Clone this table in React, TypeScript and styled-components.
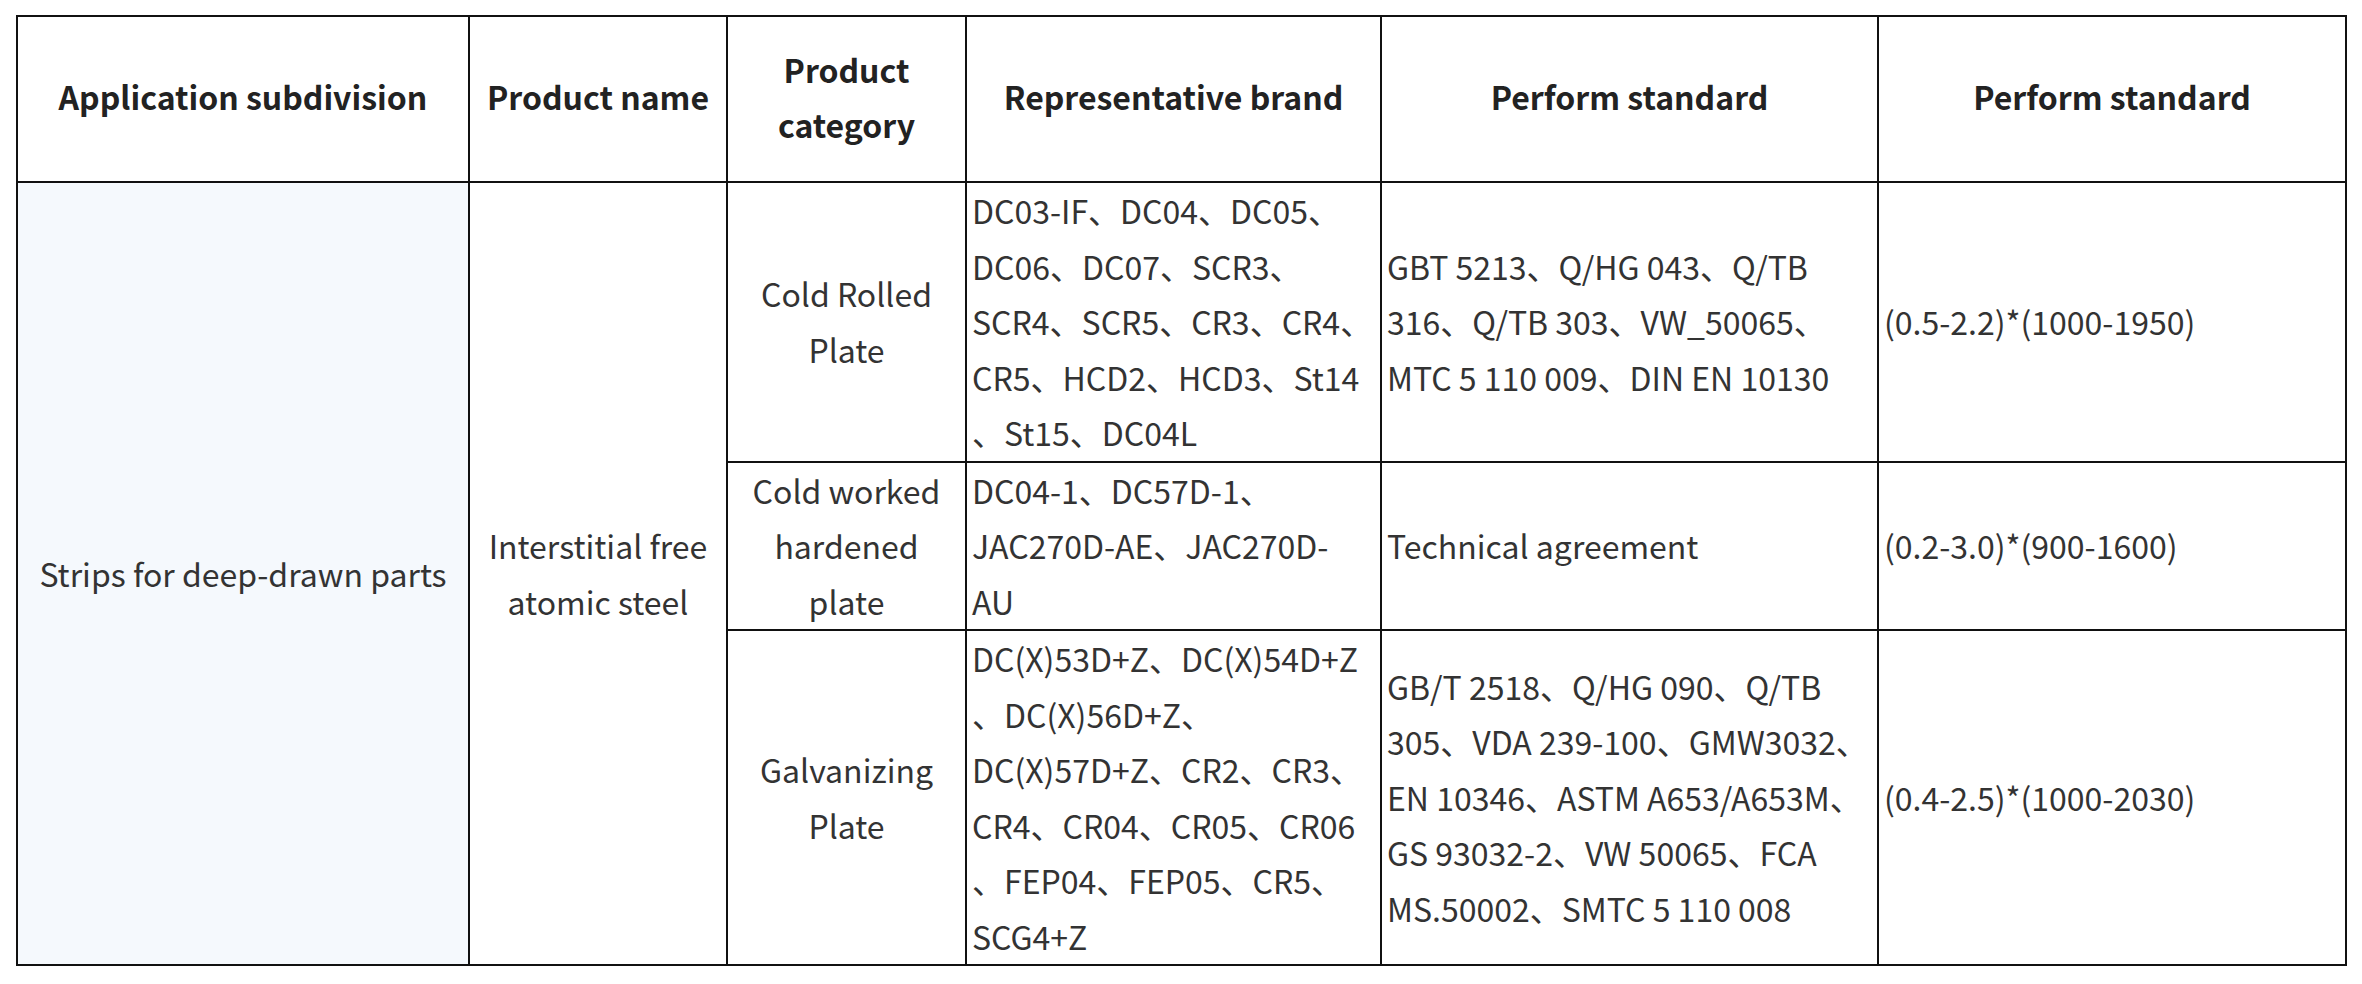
import React from "react";
import styled, { createGlobalStyle } from "styled-components";

const Global = createGlobalStyle`
  html, body { margin: 0; padding: 0; background: #ffffff; }
  body { font-family: "Noto Sans CJK SC", "Noto Sans", sans-serif; }
`;

const Page = styled.div`
  padding: 15px 16px;
  width: 2362px;
  box-sizing: border-box;
`;

const Table = styled.table`
  width: 2329px;
  border-collapse: collapse;
  table-layout: fixed;
  border: 2px solid #111;
  font-family: "Noto Sans CJK SC", "Noto Sans", sans-serif;
  font-size: 32px;
  line-height: 55.5px;
  color: #333;
`;

const Th = styled.th`
  border: 2px solid #111;
  font-weight: 700;
  color: #222;
  text-align: center;
  vertical-align: middle;
  padding: 24px 6px 28px;
  height: 166px;
  box-sizing: border-box;
`;

const Td = styled.td<{ $align?: "left" | "center"; $tint?: boolean }>`
  border: 2px solid #111;
  padding: 0 5px;
  text-align: ${(p) => p.$align ?? "center"};
  vertical-align: middle;
  background: ${(p) => (p.$tint ? "#f5f9fd" : "#ffffff")};
  white-space: nowrap;
`;

const Lines = ({ lines }: { lines: string[] }) => (
  <>
    {lines.map((l, i) => (
      <React.Fragment key={i}>
        {i > 0 && <br />}
        {l}
      </React.Fragment>
    ))}
  </>
);

const widths = [452, 258, 239, 415, 497, 468];

const headers: string[][] = [
  ["Application subdivision"],
  ["Product name"],
  ["Product", "category"],
  ["Representative brand"],
  ["Perform standard"],
  ["Perform standard"],
];

const rows = [
  {
    category: ["Cold Rolled", "Plate"],
    brand: [
      "DC03-IF、DC04、DC05、",
      "DC06、DC07、SCR3、",
      "SCR4、SCR5、CR3、CR4、",
      "CR5、HCD2、HCD3、St14",
      "、St15、DC04L",
    ],
    standard: [
      "GBT 5213、Q/HG 043、Q/TB",
      "316、Q/TB 303、VW_50065、",
      "MTC 5 110 009、DIN EN 10130",
    ],
    size: "(0.5-2.2)*(1000-1950)",
  },
  {
    category: ["Cold worked", "hardened", "plate"],
    brand: ["DC04-1、DC57D-1、", "JAC270D-AE、JAC270D-", "AU"],
    standard: ["Technical agreement"],
    size: "(0.2-3.0)*(900-1600)",
  },
  {
    category: ["Galvanizing", "Plate"],
    brand: [
      "DC(X)53D+Z、DC(X)54D+Z",
      "、DC(X)56D+Z、",
      "DC(X)57D+Z、CR2、CR3、",
      "CR4、CR04、CR05、CR06",
      "、FEP04、FEP05、CR5、",
      "SCG4+Z",
    ],
    standard: [
      "GB/T 2518、Q/HG 090、Q/TB",
      "305、VDA 239-100、GMW3032、",
      "EN 10346、ASTM A653/A653M、",
      "GS 93032-2、VW 50065、FCA",
      "MS.50002、SMTC 5 110 008",
    ],
    size: "(0.4-2.5)*(1000-2030)",
  },
];

export default function App() {
  return (
    <Page>
      <Global />
      <Table>
        <colgroup>
          {widths.map((w, i) => (
            <col key={i} style={{ width: w }} />
          ))}
        </colgroup>
        <thead>
          <tr>
            {headers.map((h, i) => (
              <Th key={i}>
                <Lines lines={h} />
              </Th>
            ))}
          </tr>
        </thead>
        <tbody>
          {rows.map((r, i) => (
            <tr key={i}>
              {i === 0 && (
                <>
                  <Td rowSpan={3} $tint>
                    Strips for deep-drawn parts
                  </Td>
                  <Td rowSpan={3}>
                    <Lines lines={["Interstitial free", "atomic steel"]} />
                  </Td>
                </>
              )}
              <Td>
                <Lines lines={r.category} />
              </Td>
              <Td $align="left">
                <Lines lines={r.brand} />
              </Td>
              <Td $align="left">
                <Lines lines={r.standard} />
              </Td>
              <Td $align="left">{r.size}</Td>
            </tr>
          ))}
        </tbody>
      </Table>
    </Page>
  );
}
